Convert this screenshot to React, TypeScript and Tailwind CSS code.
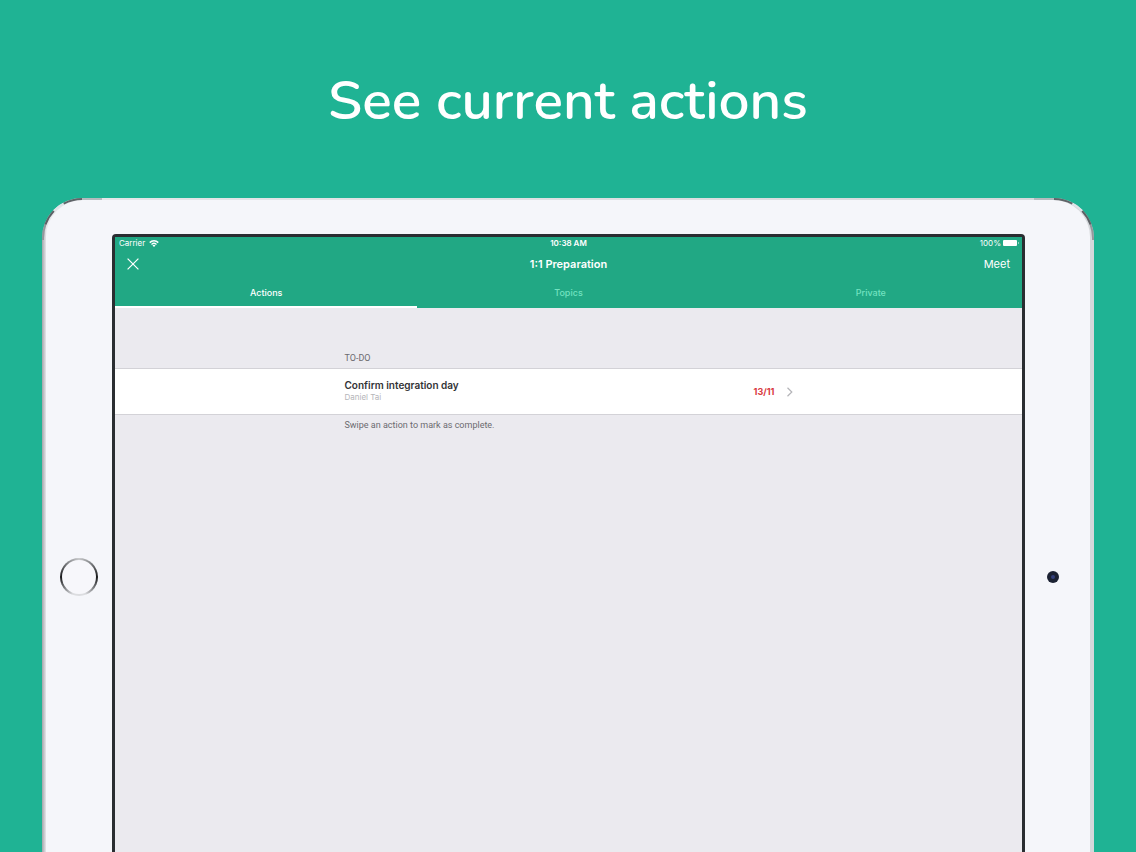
import { useState } from "react";

const tabs = ["Actions", "Topics", "Private"];

function WifiIcon() {
  return (
    <svg width="10" height="7" viewBox="0 0 20 14" aria-hidden="true">
      <path d="M1.500 5.200 A12 12 0 0 1 18.500 5.200" fill="none" stroke="white" strokeWidth="3" />
      <path d="M5 8.800 A7.500 7.500 0 0 1 15 8.800" fill="none" stroke="white" strokeWidth="2.600" />
      <path d="M10 14 L7 10.800 A4.200 4.200 0 0 1 13 10.800 Z" fill="white" />
    </svg>
  );
}

function BatteryIcon() {
  return (
    <svg width="17" height="6" viewBox="0 0 17 6" aria-hidden="true">
      <rect x="0" y="0" width="14" height="6" rx="1" fill="white" />
      <path d="M15.500 2 V4" stroke="#8fd3bd" strokeWidth="1" />
    </svg>
  );
}

function DeviceCorner({ className }: { className: string }) {
  return (
    <svg className={className} width="60" height="42" viewBox="0 0 60 42" fill="none" aria-hidden="true">
      <path d="M1 42 V40 A39 39 0 0 1 3.400 26.700" stroke="#94979c" strokeWidth="2" />
      <path d="M3.400 26.700 A39 39 0 0 1 11.900 12.900" stroke="#5c6165" strokeWidth="2" />
      <path d="M11.900 12.900 A39 39 0 0 1 21.700 5.600" stroke="#dfe4e8" strokeWidth="2" />
      <path d="M21.700 5.600 A39 39 0 0 1 40 1" stroke="#5f6468" strokeWidth="2" />
      <path d="M40 1 H60" stroke="#b4bbbe" strokeWidth="2" />
    </svg>
  );
}

export default function App() {
  const [active, setActive] = useState("Actions");

  return (
    <div className="flex min-h-screen flex-col overflow-hidden bg-[#1fb394] font-['Inter','Liberation_Sans',sans-serif]">
      <h1 className="pt-[65px] pb-[61px] text-center font-['Nunito','Lato',sans-serif] text-[55px] leading-[72px] font-semibold text-white">
        See current actions
      </h1>

      <div className="relative mx-[42px] flex flex-1 rounded-t-[40px] bg-linear-to-r from-[#a3a5aa] via-[#e6e7ea] via-[4px] to-[#d5d8db] px-1 pt-0.5">
        <div className="flex flex-1 rounded-t-[37px] bg-[#f5f6fa]">
          <div className="flex w-[66px] shrink-0 justify-center pt-[358px]">
            <button
              type="button"
              aria-label="Home"
              className="size-[38px] rounded-full bg-[conic-gradient(#c9cacc,#77797c_45deg,#17181a_90deg,#77797c_125deg,#dcdde0_160deg,#dcdde0_200deg,#77797c_235deg,#17181a_270deg,#77797c_315deg,#c9cacc)] p-0.5"
            >
              <span className="block size-full rounded-full bg-[#f7f7fb]" />
            </button>
          </div>

          <main className="mt-[34px] flex min-w-0 flex-1 flex-col rounded-t-sm border-x-3 border-t-3 border-[#2a2d31] bg-[#ebeaef]">
            <header className="bg-[#21a884] text-white">
              <div className="grid h-3 grid-cols-3 items-center text-[8px] leading-3">
                <div className="flex items-center gap-1 pl-1">
                  <span>Carrier</span>
                  <WifiIcon />
                </div>
                <span className="text-center font-semibold">10:38 AM</span>
                <div className="flex items-center justify-end gap-0.5 pr-0.5">
                  <span>100%</span>
                  <BatteryIcon />
                </div>
              </div>

              <div className="grid h-[30px] grid-cols-3 items-center px-3">
                <button type="button" aria-label="Close" className="w-3">
                  <svg width="12" height="12" viewBox="0 0 12 12" stroke="white" strokeWidth="1.200" aria-hidden="true">
                    <path d="M0.600 0.600 L11.400 11.400 M11.400 0.600 L0.600 11.400" />
                  </svg>
                </button>
                <h2 className="text-center text-[11px] leading-4 font-semibold">1:1 Preparation</h2>
                <button type="button" className="justify-self-end text-[11px] leading-4">
                  Meet
                </button>
              </div>

              <div role="tablist" className="grid h-[29px] grid-cols-3">
                {tabs.map((tab) => (
                  <button
                    key={tab}
                    type="button"
                    role="tab"
                    aria-selected={active === tab}
                    onClick={() => setActive(tab)}
                    className={
                      active === tab
                        ? "border-b-2 border-white text-[9px] leading-3 font-medium text-white"
                        : "border-b-2 border-transparent text-[9px] leading-3 font-medium text-[#72e2c0]"
                    }
                  >
                    {tab}
                  </button>
                ))}
              </div>
            </header>

            <section className="pt-11">
              <h3 className="mx-auto w-full max-w-md pb-1 font-['Roboto',sans-serif] text-[9px] leading-3 text-[#6b6b70]">
                TO-DO
              </h3>
              <a href="#confirm" className="block border-y border-[#d3d2d7] bg-white">
                <div className="mx-auto flex h-[45px] w-full max-w-md items-center">
                  <div className="flex-1 pb-1">
                    <p className="text-[10px] leading-[14px] font-semibold text-[#333336]">Confirm integration day</p>
                    <p className="text-[8px] leading-[10px] text-[#b5b5b9]">Daniel Tai</p>
                  </div>
                  <span className="text-[9px] leading-3 font-bold text-[#d93a40]">13/11</span>
                  <svg className="ml-3" width="6" height="10" viewBox="0 0 6 10" fill="none" stroke="#b4b4b8" strokeWidth="1.200" aria-hidden="true">
                    <path d="M0.500 0.800 L4.800 5 L0.500 9.200" />
                  </svg>
                </div>
              </a>
              <p className="mx-auto w-full max-w-md pt-1 font-['Roboto',sans-serif] text-[9px] leading-3 text-[#6b6b70]">
                Swipe an action to mark as complete.
              </p>
            </section>
          </main>

          <div className="flex w-[65px] shrink-0 pt-[371px] pl-[22px]">
            <span className="flex size-3 items-center justify-center rounded-full bg-[#1c2233]">
              <span className="size-1 rounded-full bg-[#34407c]" />
            </span>
          </div>
        </div>

        <DeviceCorner className="pointer-events-none absolute top-0 left-0" />
        <DeviceCorner className="pointer-events-none absolute top-0 right-0 -scale-x-100" />
      </div>
    </div>
  );
}
